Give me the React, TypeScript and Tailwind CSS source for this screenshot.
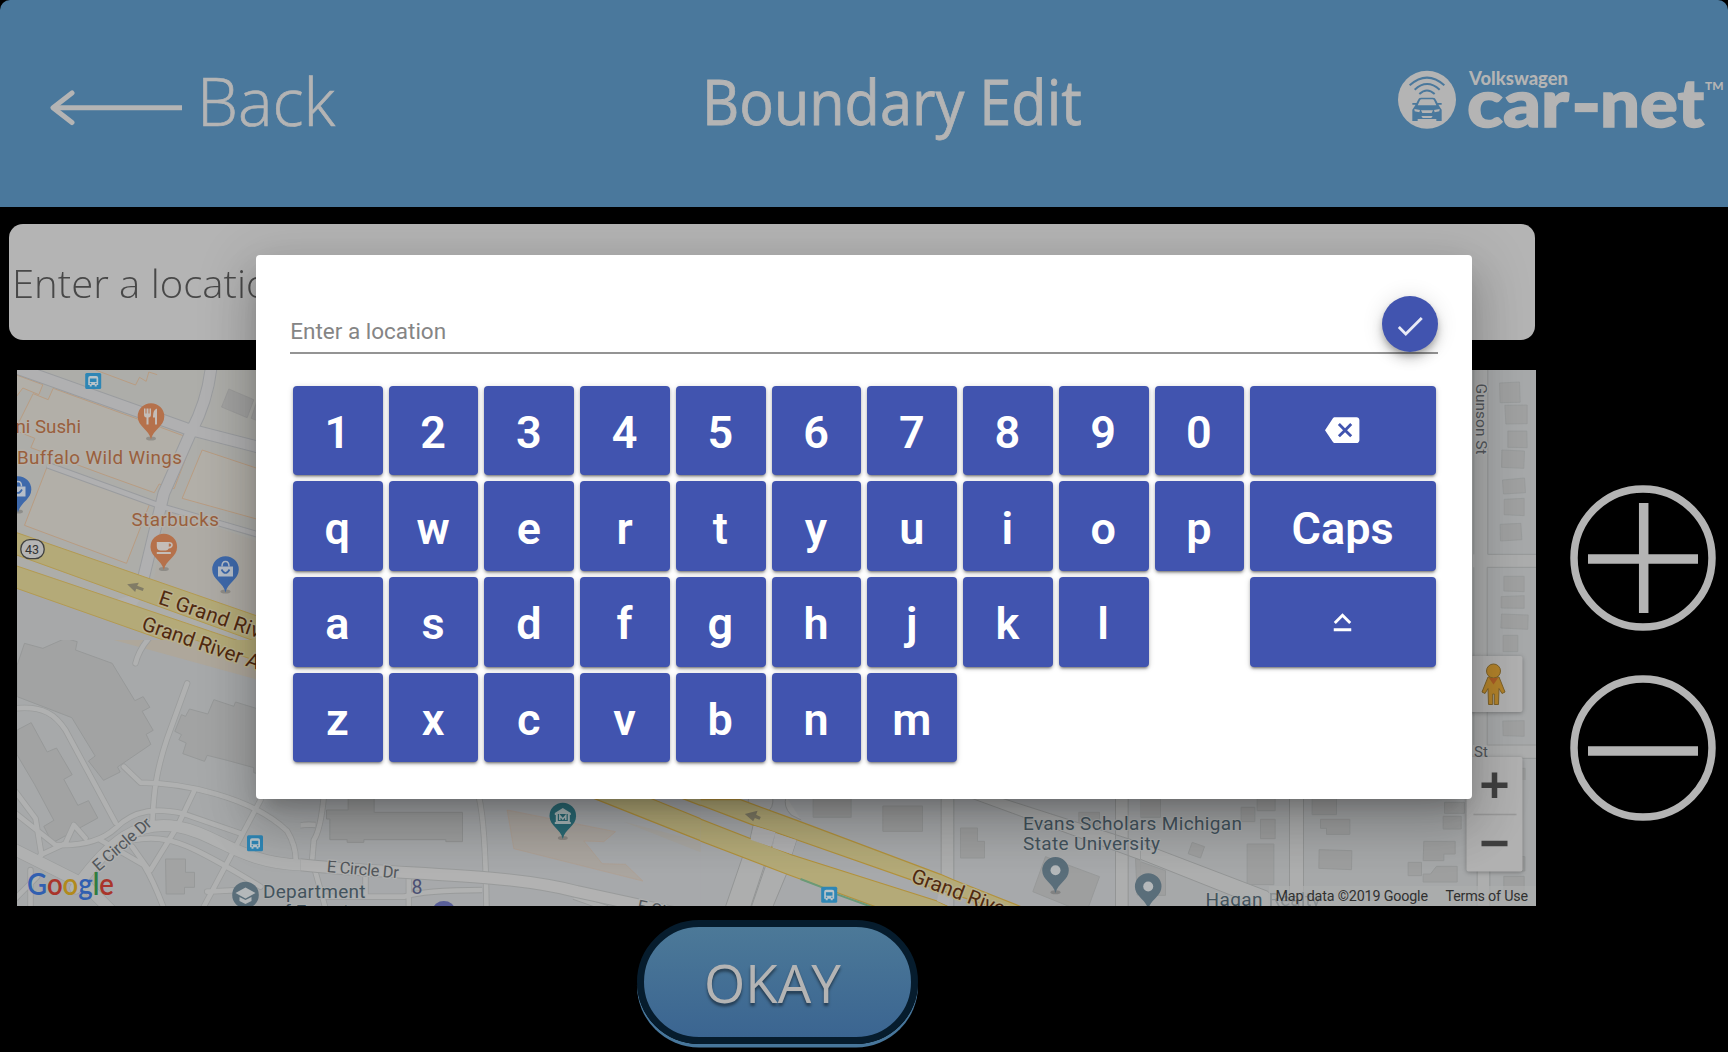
import React from "react";

const rows = [
  ["1", "2", "3", "4", "5", "6", "7", "8", "9", "0", "backspace"],
  ["q", "w", "e", "r", "t", "y", "u", "i", "o", "p", "Caps"],
  ["a", "s", "d", "f", "g", "h", "j", "k", "l", "", "shift"],
  ["z", "x", "c", "v", "b", "n", "m"],
];

function Key({ name }: { name: string }) {
  if (!name) return <div />;
  return (
    <button
      aria-label={name}
      className="flex h-[89.7px] items-center justify-center rounded-[4px] bg-[#4154af] text-[45px] leading-none font-semibold text-white shadow-[0_3px_2px_-2px_rgba(0,0,0,0.3),0_2px_3px_rgba(0,0,0,0.24),0_1px_6px_rgba(0,0,0,0.14)]"
    >
      {name === "backspace" ? (
        <svg viewBox="0 0 24 24" className="mr-[1px] h-[34.4px] w-[34.4px]" fill="currentColor">
          <path d="M22 3H7c-.69 0-1.23.35-1.59.88L0 12l5.41 8.11c.36.53.9.89 1.59.89h15c1.1 0 2-.9 2-2V5c0-1.100-.9-2-2-2zm-3 12.590L17.590 17 14 13.410 10.410 17 9 15.590 12.590 12 9 8.410 10.410 7 14 10.590 17.590 7 19 8.410 15.410 12 19 15.590z" />
        </svg>
      ) : name === "shift" ? (
        <svg viewBox="0 0 24 24" className="mt-[1px] mr-[1px] h-[35px] w-[35px]" fill="currentColor">
          <path d="M12 8.410 16.590 13 18 11.590l-6-6-6 6L7.410 13zM6 18v-2h12v2z" />
        </svg>
      ) : (
        <span className="pt-[4px] pr-[1px]">{name}</span>
      )}
    </button>
  );
}

function Keyboard() {
  return (
    <div className="mt-[32px] ml-[2.8px] grid grid-cols-[repeat(10,89.7px)_185.5px] gap-x-[6.05px] gap-y-[6px]">
      {rows.flat().map((k, i) => (
        <Key key={i} name={k} />
      ))}
    </div>
  );
}

function Dialog() {
  return (
    <div className="absolute top-[255px] left-[256.4px] h-[543.7px] w-[1215.8px] rounded-[4px] bg-white px-[33.800px] pt-[40px] font-['Roboto',sans-serif] shadow-[0_13px_18px_-8px_rgba(0,0,0,0.2),0_29px_46px_4px_rgba(0,0,0,0.14),0_11px_55px_10px_rgba(0,0,0,0.12)]">
      <div className="flex h-[58.500px] items-end justify-between border-b-[2px] border-[#949494]">
        <span className="pb-[7px] text-[22.5px] leading-[28px] text-[#858585]">Enter a location</span>
        <button
          aria-label="Confirm"
          className="-mb-[0.5px] flex h-[56.500px] w-[56.500px] items-center justify-center rounded-full bg-[#4154af] text-[#e9ebf6] shadow-[0_4px_6px_-1px_rgba(0,0,0,0.25),0_8px_12px_rgba(0,0,0,0.14),0_1px_22px_rgba(0,0,0,0.12)]"
        >
          <svg viewBox="0 0 24 24" className="mt-[4px] h-[34px] w-[34px]" fill="currentColor">
            <path d="M9 16.170 4.830 12l-1.420 1.410L9 19 21 7l-1.410-1.410z" />
          </svg>
        </button>
      </div>
      <Keyboard />
    </div>
  );
}

function Logo() {
  return (
    <svg viewBox="1390 60 338 80" className="absolute top-[60px] right-0 h-[80px] w-[338px]" fill="#b4b4b4" fontFamily="Lato, sans-serif">
      <circle cx="1427" cy="99.700" r="29" />
      <g transform="translate(1300 30) scale(.33333)" fill="none" stroke="#4a789c" strokeWidth="6">
        <path d="M329 166q52-46 104 0M344 179q37-34 75 0M358 192q23-21 46 0" />
        <path fill="#4a789c" stroke="none" d="M337 273v-34l8-12 9-17q2-7 9-7h36q7 0 9 7l9 17 8 12v34h-16v-6h-56v6zM337 219h12v5h-12zM413 219h12v5h-12z" />
        <path fill="#b4b4b4" stroke="none" d="M353 226l7-15q1-3 5-3h32q4 0 5 3l7 15zM343 237l17 3-2 7-14-3zM419 237l-17 3 2 7 14-3zM363 241h36l-4 8h-28zM364 258h34l-4 6h-26z" />
      </g>
      <text x="1469" y="85.300" fontSize="19" fontWeight="900" textLength="99" lengthAdjust="spacingAndGlyphs">Volkswagen</text>
      <g stroke="#b4b4b4" strokeWidth="1.500">
        <text x="1467" y="127" fontSize="67" fontWeight="900" textLength="102" lengthAdjust="spacingAndGlyphs">car</text>
        <rect x="1575.500" y="103.800" width="21.500" height="7.600" />
        <text x="1600" y="127" fontSize="67" fontWeight="900" textLength="104" lengthAdjust="spacingAndGlyphs">net</text>
      </g>
      <text x="1705" y="89.500" fontSize="11.500" fontWeight="900" textLength="18.500" lengthAdjust="spacingAndGlyphs">TM</text>
    </svg>
  );
}

function Header() {
  return (
    <header className="relative flex h-[206.5px] shrink-0 rounded-t-[10px] bg-[#4a789c] font-['Open_Sans',sans-serif] text-[#b4b4b4]">
      <button aria-label="Back" className="flex w-[702px] pl-[50px] text-left">
        <svg viewBox="0 0 132 40" className="mt-[88px] h-[40px] w-[132px]" fill="none" stroke="currentColor" strokeWidth="5">
          <path d="M3 19.700h129" />
          <path d="M22 5 3 19.700 22 34.500" strokeLinecap="round" strokeLinejoin="round" />
        </svg>
        <span className="mt-[60px] ml-[15px] origin-left scale-x-[0.975] text-[67px] leading-[80px] font-light [-webkit-text-stroke:0.7px_#b4b4b4]">Back</span>
      </button>
      <h1 className="mt-[61px] origin-left scale-x-[0.915] text-[63px] leading-[80px] font-medium whitespace-nowrap [-webkit-text-stroke:0.8px_#b4b4b4]">Boundary Edit</h1>
      <Logo />
    </header>
  );
}

function Pin({ x, y, color, children }: { x: number; y: number; color: string; children?: React.ReactNode }) {
  return (
    <g transform={`translate(${x} ${y})`}>
      <ellipse cx="0" cy="22" rx="5" ry="2" fill="#000" opacity=".18" />
      <path d="M0 23C-2 13-13.300 10-13.300 0a13.300 13.300 0 0 1 26.600 0C13.300 10 2 13 0 23z" fill={color} />
      {children}
    </g>
  );
}

function Bus({ x, y }: { x: number; y: number }) {
  return (
    <g transform={`translate(${x} ${y})`}>
      <rect x="-8" y="-8" width="16" height="16" rx="1.500" fill="#2e86b5" />
      <path d="M-5-3q0-2 2-2h6q2 0 2 2v7h-1.500v1.500h-2V4h-3v1.500h-2V4H-5z" fill="#b8c4ca" />
      <path d="M-3.300-2.500h6.600V1h-6.600z" fill="#2e86b5" />
      <circle cx="-2.700" cy="2.500" r=".8" fill="#2e86b5" />
      <circle cx="2.700" cy="2.500" r=".8" fill="#2e86b5" />
    </g>
  );
}

function MapTopLeft() {
  return (
    <svg x="0" y="350" width="300" height="290" viewBox="0 0 900 870" fill="none">
      <path fill="#adada9" d="M0 0h900v870H0z" />
      <path fill="#a7a8a9" d="M0 700l520 170H0z" />
      <g fill="#b2afa8" stroke="#b89c82" strokeWidth="3">
        <path d="M40 72l87 32-12 30-48-20-60 80V40z" />
        <path d="M158 115L480 232l68 25-8 26 27 12-46 121-45-14-15 26-145-52-225-83 12-28-60-24 55-110 45 18z" />
        <path d="M142 345l305 118-69 177L72 526zM605 300l300 100v145L545 445z" />
        <path fill="none" d="M285 60l120 45 12-23 20 12 8-28 25 8" />
      </g>
      <path d="M500 480l400 140v250L460 690z" fill="#aeaba5" />
      <g strokeLinejoin="round">
        <g stroke="#9a9c9f">
          <path strokeWidth="38" d="M50 55L555 235l350 90M632 50q-10 100-60 195L490 430 425 700" />
          <path strokeWidth="20" d="M140 345L485 470l430 125" />
        </g>
        <g stroke="#b0b0b1">
          <path strokeWidth="32" d="M50 55L555 235l350 90M632 50q-10 100-60 195L490 430 425 700" />
          <path strokeWidth="14" d="M140 345L485 470l430 125" />
        </g>
      </g>
      <path d="M685 117l75 32-20 54-77-32zM770 150l80 30-20 55-78-30z" fill="#a2a2a1" stroke="#999" strokeWidth="2" />
      <path d="M340 750l70-18q20 20-20 48z" fill="#b0b0b1" />
      <g stroke="#b39a52" strokeWidth="3" fill="#b4aa78">
        <path d="M40 545L900 843v80L40 612z" />
        <path d="M40 645L900 935v80L40 712z" />
      </g>
      <path d="M380 703l35-5-5 9 20 8-3 8-20-7-3 10z" fill="#817c66" />
      <rect x="61" y="569" width="70" height="57" rx="27" fill="#b5b5b5" stroke="#404040" strokeWidth="4" />
    </svg>
  );
}

function MapBottomLeft() {
  const paths =
    "M45 205c85-8 120 20 150 65L345 548M560 130l-60 165c-40 120-40 180-45 260M370 380l50 48c120 0 330 40 440 145q30 50 25 100M45 455l60 80 18 110M45 520l120 95q120 5 180-50c60-60 130-60 200-45l180 62M120 645l75-35 25-55 35 40M300 600l130 75q30 50 60 130M580 455l-50 105-80 130M395 620l50 70M400 600c110-20 180 20 380 140M780 480l-170 320M620 755l100-5M90 690v110M40 780l70-70M405 70q10-40 40-75";
  return (
    <svg x="0" y="640" width="300" height="280" viewBox="0 0 900 840" fill="none">
      <path fill="#a7a9aa" d="M0 0h900v840H0z" />
      <path d="M340 0h560v155z" fill="#aea79b" />
      <g fill="#a2a3a3" stroke="#979999" strokeWidth="3">
        <path d="M50 75L72 10l55 15L195-5l35 10-5 25 110 40 68 112 25-12 20 32-23 12 33 57-21 12 14 30-100 68 8 15-50 25-45-58 20-15-70-115L50 170z" />
        <path d="M50 270l42-22 48 88 28-12 47 80-25 14 42 78 32-14 28 52-137 75-25-50 30-18-58-108L50 345z" />
        <path d="M567 207l55 15 18-43 60 20 5-13 195 60v190l-140-38v-15l-80-22-60-15-8 18-65-23 10-32-22-10 8-15-20-10 20-50 12 5zM495 657h60v40h27v45h-30v20h-55z" />
      </g>
      <g strokeLinecap="round" strokeLinejoin="round">
        <g stroke="#9b9d9d"><path strokeWidth="19" d={paths} /><path strokeWidth="37" d="M35 625l220 110 80 80M225 745C330 600 410 540 530 560S720 675 920 675" /></g>
        <g stroke="#b0b1b1"><path strokeWidth="14" d={paths} /><path strokeWidth="33" d="M35 625l220 110 80 80M225 745C330 600 410 540 530 560S720 675 920 675" /></g>
      </g>
      <path d="M440-50l480 165v-75L640-60z" fill="#b4aa78" stroke="#b39a52" strokeWidth="3" />
      <path d="M740-12l180 62v-80z" fill="#b4aa78" stroke="#b39a52" strokeWidth="3" />
    </svg>
  );
}

function MapBottomCenter() {
  const side = "M0 105q110 50 105 260M75 150q40-20 90-15M190 50q-10 100-30 130l-5 60 40 145M655 50q20 80 23 340M315 290v60M445 295v90M170 350h260q60-20 235-20M940 350l100 35";
  return (
    <svg x="300" y="780" width="440" height="140" viewBox="120 0 1320 420" fill="none">
      <path fill="#a7a9ab" d="M0 0h1440v420H0z" />
      <path d="M198 90h65V30h78v67h265v88h-50v-6H310v8h-50v-8h-52v-62h-10z" fill="#9fa0a0" stroke="#939595" strokeWidth="3" />
      <path d="M740 90l225 45 100 20-35 30-60-2 55 68 70 2 52 50-387-97z" fill="#aaa59f" stroke="#b09f90" strokeWidth="2" />
      <path d="M1090 125l350 90v50z" fill="#a9a7a2" />
      <path stroke="#999b9b" strokeWidth="19" d={side} />
      <path stroke="#b0b1b1" strokeWidth="14" d={side} />
      <path stroke="#999b9b" strokeWidth="39" d="M0 240c350 50 700 30 950 95l300 65" />
      <path stroke="#b2b2b2" strokeWidth="33" d="M0 240c350 50 700 30 950 95l300 65" />
      <g fill="#b4aa78" stroke="#b3923c" strokeWidth="3.500">
        <path d="M1000 55l440 175v-65L1170 55zM1265 55l175 68V55z" />
      </g>
      <path d="M1440 230v160h-52z" fill="#b0b0b1" />
      <ellipse cx="550" cy="388" rx="32" ry="25" fill="#595f99" />
    </svg>
  );
}

function MapBottomRight() {
  return (
    <svg x="700" y="780" width="440" height="140" viewBox="0 0 1320 420" fill="none">
      <path fill="#a7a9ab" d="M0 0h1440v420H0z" />
      <g stroke="#979999" strokeWidth="3" fill="#9e9f9f">
        <path d="M338 55h114v57H338zM547 78h119v76H547zM780 144h51v40h21v50h-72zM1035 230l162 60-40 110-160-65zM1305 235l90 35v75h-85zM1325 55h55v60h-55zM1135 97h62v40h-62z" />
      </g>
      <g stroke="#939595" strokeWidth="3" fill="#adaeae">
        <path d="M722 50h38v340h-38zM1245 50h38v340h-38zM800 50l520 190v-52L890 50z" />
        <path d="M128 225l68 30-50 145H68zM192 255l67 25-50 120h-65z" />
        <path d="M160 125l65 25-15 55-62-25zM225 155l63 25-15 48-55-20zM145 50q-5 25 5 40l50 5q20-10 17-45zM257 50q-10 30 15 55l30 15" />
      </g>
      <g fill="#b4aa78" stroke="#b3923c" strokeWidth="3.500">
        <path d="M-5 73l165 63 62 20 500 175 200 65h80L760 300l-40-17-431-162-169-62H-5z" />
        <path d="M-5 115l280 110 435 138 60 30H560L258 282-5 181z" />
      </g>
      <path d="M160 137l65 20-13 44-62-22zM224 160l64 20-14 43-58-20zM715 338l35 10-5 30-36-15z" fill="#b0b0b1" />
      <path d="M300 297l65 25M410 343l110 40" stroke="#6a9a78" strokeWidth="6" />
      <path d="M133 102l38-10-4 12 14 7-4 8-14-5-5 10z" fill="#817c66" />
    </svg>
  );
}

function MapFarRight() {
  return (
    <svg x="1140" y="780" width="400" height="140" viewBox="0 0 1200 420" fill="none">
      <path fill="#a6a8a9" d="M0 0h1200v420H0z" />
      <g stroke="#969898" strokeWidth="3" fill="#9e9f9f">
        <path d="M0 0h60v112H0zM302 82h41v43h-41zM350 30h54v62h-54zM360 118h44v58h-44zM155 187l37 13-12 34-37-13zM320 192h80v122h-80zM515 50h73v54h-73zM540 118h88v45h-70v-18h-18zM536 209l98 3-1 57-98-4zM912 67h60v33h-60zM908 109h54v38h-54zM850 184h94v38h-34v20h-62zM803 247h40v40h-40zM848 282h22l18-23h62v47H848zM1090 289h61v50h-61zM1140 230h13v43h-13zM0 245l75 27v74H0z" />
      </g>
      <g stroke="#939595" strokeWidth="3" fill="#adaeae">
        <path d="M447 30h42v360h-42zM0 188l380 145 60 50h-75L0 238zM1010 250h38v140h-38z" />
      </g>
      <path d="M385 318h815v72H385z" fill="#adaeae" opacity=".7" />
    </svg>
  );
}

function MapRightEdge() {
  return (
    <svg x="1440" y="360" width="100" height="420" viewBox="0 0 300 1260" fill="none">
      <path fill="#a7a9aa" d="M0 0h300v1260H0z" />
      <path fill="#acadad" d="M90 0h50v1260H90zM90 583h210v38H90zM90 1155h210v40H90z" />
      <path stroke="#969898" strokeWidth="3" d="M142 0v583h158M300 622H140v533h160M100 0v583M100 622v533M300 1195h-55" />
      <g stroke="#969898" strokeWidth="2" fill="#a0a1a1">
        <path d="M177 69l60-3 2 61-60 1zM193 136l67-1v56l-64 1zM202 213h57l1 50-58-1zM184 270l68 3-2 52-67-3zM186 360l66-6 3 44-66 4zM191 418l60-3v52l-60-3zM179 493l62-3 3 49-64 4zM190 649h61v46l-61-2zM182 710l69-3v38l-69-1zM183 762l80 3-1 43-81-4zM188 826h44v49h-44zM187 1083l64-1v47l-63-2zM244 1225h10v55h-10z" />
      </g>
    </svg>
  );
}

function MapView() {
  return (
    <svg viewBox="16.500 370 1519.500 536" className="mt-[30px] ml-[16.5px] block h-[536px] w-[1519.5px] overflow-hidden font-['Roboto',sans-serif]">
      <rect x="16" y="370" width="1521" height="536" fill="#a7a9aa" />
      <MapTopLeft />
      <MapBottomLeft />
      <MapBottomCenter />
      <MapBottomRight />
      <MapFarRight />
      <MapRightEdge />

      <Bus x={92.700} y={381} />
      <Bus x={254.500} y={843.300} />
      <Bus x={828.700} y={894.700} />
      <Pin x={150.500} y={416.500} color="#b5714b">
        <path d="M-7-8v6q0 3 2.500 3v7h2V1Q0 1 0-2v-6h-1.500v5h-1v-5h-2v5h-1v-5zM2 0q0-7 4-8V8H4V1H2z" fill="#c4bdb8" />
      </Pin>
      <Pin x={163.300} y={547} color="#b5714b">
        <path d="M-7-5H5q4 0 4 3.200Q8.500 1 5 1.500 4 3.500 2 3.500h-5q-4 0-4-4zM5-3.500v3.200q2.500 0 2.500-1.700T5-3.500zM-7 5H7v2H-7z" fillRule="evenodd" fill="#c4bdb8" />
      </Pin>
      {[[17.500, 489.500], [225, 569.500]].map(([x, y]) => (
        <Pin key={x} x={x} y={y} color="#3e69ab">
          <path d="M-7.500-3h15v10h-15z" fill="#b6bec9" />
          <path d="M-3.500-3q0-5 3.500-5t3.500 5" fill="none" stroke="#b6bec9" strokeWidth="1.500" />
          <path d="M-4 0q4 7 8 0" fill="none" stroke="#3e69ab" strokeWidth="1.700" />
        </Pin>
      ))}
      <Pin x={562.300} y={816} color="#2b6b76">
        <path d="M-8-3 0-8l8 5v2h-1v7h1v2H-8V6h1v-7h-1z" fill="#aab9ba" />
        <path d="M-5-2H5v7H-5z" fill="#2b6b76" />
        <path d="M-3 4v-4.500L0 3l3-3.500V4" fill="none" stroke="#aab9ba" strokeWidth="1.500" />
      </Pin>
      {[[1055, 870.300], [1147.700, 886.500]].map(([x, y]) => (
        <Pin key={x} x={x} y={y} color="#5a6e7a">
          <circle r="5" fill="#b4b8ba" />
        </Pin>
      ))}
      <circle cx="245" cy="895" r="13.300" fill="#5a6e7a" />
      <path d="M235 893l10-5.500 10 5.500-10 5.500zM239 897v4l6 3 6-3v-4l-6 3z" fill="#b4b8ba" />

      <g fontSize="18.800" fill="#995f3d" stroke="#b5b0a8" strokeWidth="3" paintOrder="stroke" strokeLinejoin="round">
        <text x="15" y="433" textLength="65.500">ni Sushi</text>
        <text x="16.500" y="464" textLength="165">Buffalo Wild Wings</text>
        <text x="131" y="526.300" textLength="87.500">Starbucks</text>
      </g>
      <text x="24.500" y="553.500" fontSize="12.500" fill="#333">43</text>
      <g fontSize="20.500" fill="#50290f" stroke="#b8b08c" strokeWidth="3" paintOrder="stroke" strokeLinejoin="round">
        <text transform="translate(157 603.500) rotate(19)" textLength="165">E Grand River Ave</text>
        <text transform="translate(140 629.500) rotate(19)" textLength="144">Grand River Ave</text>
        <text transform="translate(909.500 881.500) rotate(20.500)" textLength="144">Grand River Ave</text>
      </g>
      <g fill="#53575b" stroke="#b0b1b1" strokeWidth="2.500" paintOrder="stroke" fontSize="16.500">
        <text transform="translate(98 872) rotate(-41)" textLength="72">E Circle Dr</text>
        <text transform="translate(326 872) rotate(5)" textLength="72">E Circle Dr</text>
        <text transform="translate(636 911) rotate(12)">E Circle Dr</text>
        <text transform="translate(1475 383.500) rotate(90)" textLength="71" fontSize="15.500">Gunson St</text>
        <text x="1473.500" y="756.500" fontSize="15">St</text>
      </g>
      <g fill="#43535d" stroke="#acaeae" strokeWidth="2" paintOrder="stroke" fontSize="19">
        <text x="262.500" y="898" textLength="102.500">Department</text>
        <text x="273" y="917.500">of Forestry</text>
        <text x="1022.500" y="829.800" textLength="219">Evans Scholars Michigan</text>
        <text x="1022.500" y="849.500" textLength="137">State University</text>
        <text x="1205" y="905.500" textLength="57">Hagan</text>
        <text x="1268" y="905.500" textLength="52" opacity=".3">Realty</text>
      </g>
      <text x="411" y="893.500" fontSize="19.500" fill="#4b5073">8</text>

      <text x="26.500" y="895" fontSize="30.500" fontWeight="600" fontFamily="Lato, sans-serif" textLength="87" lengthAdjust="spacingAndGlyphs"><tspan fill="#315fb0">G</tspan><tspan fill="#a9352b">o</tspan><tspan fill="#b28a1c">o</tspan><tspan fill="#315fb0">g</tspan><tspan fill="#2f7d3f">l</tspan><tspan fill="#a9352b">e</tspan></text>
      <g fontSize="14.300" fill="#303030">
        <text x="1275" y="901" textLength="152.500">Map data ©2019 Google</text>
        <text x="1445" y="901" textLength="82.500">Terms of Use</text>
      </g>

      <rect x="1466" y="656" width="56" height="56" rx="2" fill="#b1b1b1" className="drop-shadow-[0_1px_2px_rgba(0,0,0,0.3)]" />
      <g transform="translate(1493 0)" stroke="#7e622a" strokeWidth="1" fill="#b3832b">
        <path d="M-5.500 677h11l6 15-3 1.500-3-5-.5 16H.8V694H-.8v10.500H-5l-.5-16-3 5-3-1.500z" />
        <circle cy="671" r="7" />
        <path d="M-4.500 678h9l-4.500 6.500z" fill="#aa5c26" stroke="none" />
      </g>
      <rect x="1466" y="757" width="56" height="114.500" rx="2" fill="#b1b1b1" className="drop-shadow-[0_1px_2px_rgba(0,0,0,0.3)]" />
      <path d="M1473 814.500h43" stroke="#999" strokeWidth="1.300" />
      <path d="M1481 785.300h26M1494 772.500v25.500M1481 843.500h26" stroke="#404040" strokeWidth="5.500" />
    </svg>
  );
}

function ZoomButton({ plus }: { plus?: boolean }) {
  return (
    <button aria-label={plus ? "Zoom in" : "Zoom out"}>
      <svg viewBox="-73 -73 146 146" className="block h-[146px] w-[146px]" fill="none" stroke="#b4b4b4">
        <circle r="69" strokeWidth="7.500" />
        <path d={plus ? "M-55 1H55M.7-55V55" : "M-55 3H55"} strokeWidth="9.500" />
      </svg>
    </button>
  );
}

export default function App() {
  return (
    <div className="relative flex h-[1052px] w-[1728px] flex-col overflow-hidden bg-black">
      <Header />
      <div className="flex flex-1">
        <main className="flex w-[1570px] flex-col">
          <div className="mt-[17.5px] ml-[9px] flex h-[116px] w-[1525.500px] shrink-0 items-center rounded-[14px] bg-[#b4b4b4] pl-[3px] font-['Open_Sans',sans-serif]">
            <span className="mt-[1px] origin-left scale-x-[1.04] text-[38.500px] leading-[50px] font-light text-[#484848]">Enter a location</span>
          </div>
          <MapView />
          <button className="mt-[14px] ml-[636.5px] flex h-[124px] w-[281px] shrink-0 items-center justify-center rounded-[62px] border-[7.5px] border-[#061c2d] bg-linear-to-b from-[#4c7998] to-[#3b6591] font-['Open_Sans',sans-serif] text-[53px] leading-none font-normal text-[#b4b4b4] shadow-[0_3.5px_0_#47769b] [text-shadow:0_3px_3px_rgba(0,0,0,0.45)]">
            <span className="mt-[1px] mr-[9px]">OKAY</span>
          </button>
        </main>
        <aside className="flex flex-col gap-[44px] pt-[278.4px]">
          <ZoomButton plus />
          <ZoomButton />
        </aside>
      </div>
      <Dialog />
    </div>
  );
}
